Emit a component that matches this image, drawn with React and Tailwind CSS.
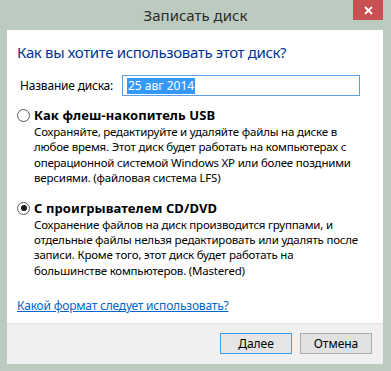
import React from "react";

function Radio({ checked }) {
    return (
        <span className="w-[13px] h-[13px] rounded-full border border-[#5a5a5a] bg-white flex items-center justify-center shrink-0">
            {checked && <span className="w-[6px] h-[6px] rounded-full bg-[#1a1a1a]" />}
        </span>
    );
}

function Option({ checked, title, children, className }) {
    return (
        <div className={className}>
            <div className="flex items-center h-[15px] leading-[15px]">
                <span className="w-[10px]" />
                <Radio checked={checked} />
                <span className="ml-[4px] font-bold text-[13px] tracking-[0.1px] text-black">{title}</span>
            </div>
            <p className="ml-[27px] w-[330px] mt-[1px] leading-[15.4px] text-black tracking-[-0.2px]">{children}</p>
        </div>
    );
}

export default function App() {
    return (
        <div
            className="w-[391px] h-[371px] bg-[#bccbbf] flex flex-col text-[11.5px]"
            style={{ fontFamily: '"Noto Sans", "Open Sans", sans-serif' }}
        >
            <div className="h-[30px] flex items-start relative">
                <div className="flex-1 text-center text-[15px] leading-[30px] text-[#2b2b2b]">Записать диск</div>
                <div className="absolute right-[8px] top-0 w-[30px] h-[20px] bg-[#c75050] flex items-center justify-center">
                    <svg width="9" height="9" viewBox="0 0 9 9">
                        <path d="M1 1 L8 8 M8 1 L1 8" stroke="#fff" strokeWidth="1.8" />
                    </svg>
                </div>
            </div>
            <div className="mx-[7px] w-[376px] h-[334px] bg-white flex flex-col">
                <div className="flex-1 pl-[10px] pt-[11px]">
                    <h1 className="text-[15px] leading-[22px] tracking-[-0.35px] text-[#003399]">Как вы хотите использовать этот диск?</h1>
                    <div className="flex items-center mt-[12px] h-[21px] text-[12px]">
                        <span className="ml-[3px] w-[102px] text-black tracking-[-0.2px]">Название диска:</span>
                        <div className="w-[238px] h-[21px] border border-[#5c9fe6] flex items-center pl-[4px]">
                            <span className="bg-[#3399ff] text-white leading-[16px] px-[1px]">25 авг 2014</span>
                        </div>
                    </div>
                    <Option checked={false} title="Как флеш-накопитель USB" className="mt-[12px] -ml-[10px]">
                        Сохраняйте, редактируйте и удаляйте файлы на диске в любое время. Этот диск будет работать на компьютерах с операционной системой Windows XP или более поздними версиями. (файловая система LFS)
                    </Option>
                    <Option checked={true} title="С проигрывателем CD/DVD" className="mt-[15px] -ml-[10px]">
                        Сохранение файлов на диск производится группами, и отдельные файлы нельзя редактировать или удалять после записи. Кроме того, этот диск будет работать на большинстве компьютеров. (Mastered)
                    </Option>
                    <a href="#" className="block mt-[20px] underline text-[#0066cc] leading-[15px] text-[12px] tracking-[-0.2px]">
                        Какой формат следует использовать?
                    </a>
                </div>
                <div className="h-[41px] border-t border-[#dfdfdf] bg-[#f0f0f0] flex justify-end items-start pt-[9px] pr-[11px] gap-[8px] text-[12px]">
                    <button className="w-[72px] h-[21px] border border-[#3c9ef0] bg-[#e5e5e5] text-black leading-[19px]">Далее</button>
                    <button className="w-[72px] h-[21px] border border-[#adadad] bg-[#e1e1e1] text-black leading-[19px]">Отмена</button>
                </div>
            </div>
        </div>
    );
}
